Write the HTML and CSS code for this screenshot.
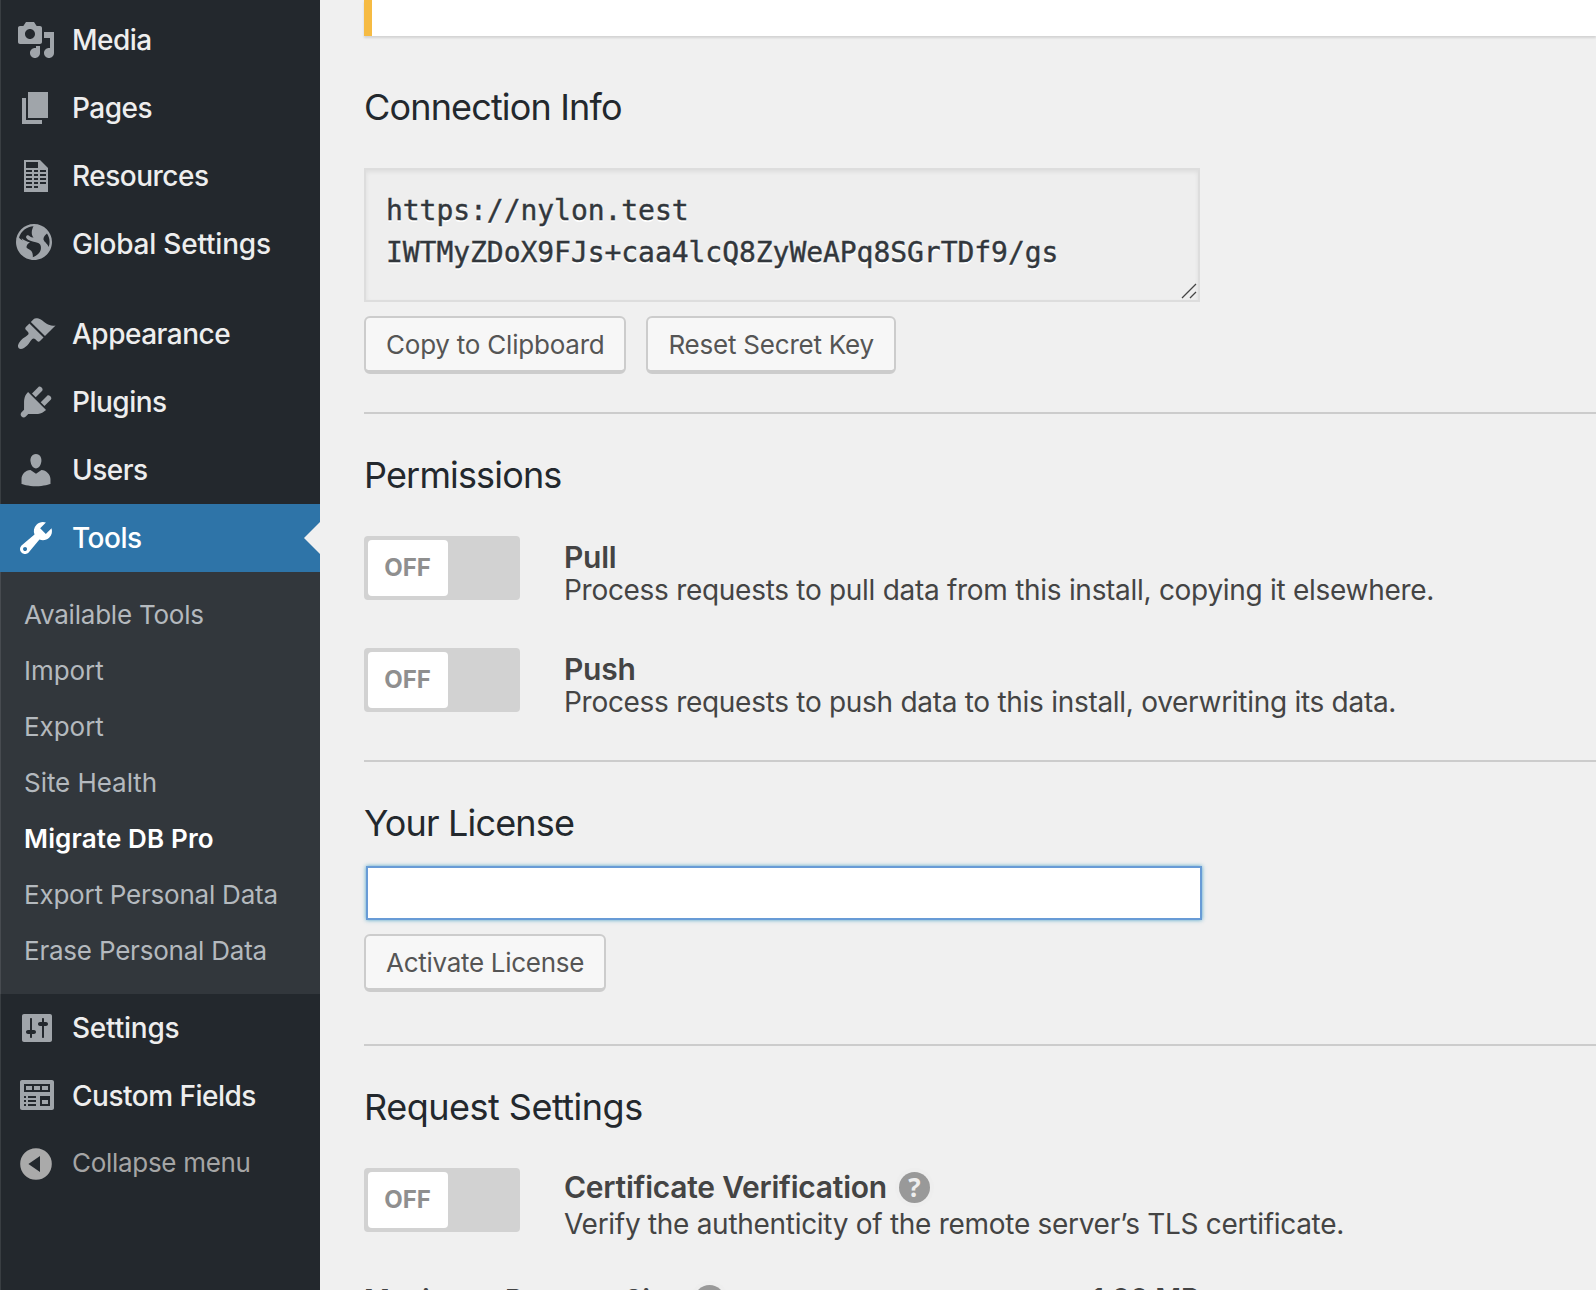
FILE: index.html
```html
<!DOCTYPE html>
<html lang="en">
<head>
<meta charset="utf-8">
<title>Migrate DB Pro</title>
<link rel="stylesheet" href="styles.css">
</head>
<body>
<div class="layout">
  <nav class="sidebar">
    <ul class="menu">
      <li class="menu-item"><svg class="icon" viewBox="0 0 20 20"><path d="M13 11V4c0-.55-.45-1-1-1h-1.67L9 1H5L3.67 3H2c-.55 0-1 .45-1 1v7c0 .55.45 1 1 1h10c.55 0 1-.45 1-1zM7 4.5c1.38 0 2.5 1.12 2.5 2.5S8.38 9.5 7 9.5 4.5 8.38 4.5 7 5.62 4.5 7 4.5zM14 6h5v10.5c0 1.38-1.12 2.5-2.5 2.5S14 17.88 14 16.5s1.12-2.5 2.5-2.5c.17 0 .34.02.5.05V9h-3V6zm-4 8.05V13h2v3.5c0 1.38-1.12 2.5-2.5 2.5S7 17.88 7 16.5 8.12 14 9.5 14c.17 0 .34.02.5.05z"/></svg><span>Media</span></li>
      <li class="menu-item"><svg class="icon" viewBox="0 0 20 20"><path d="M6 15V2h10v13H6zm-1 1h8v2H3V5h2v11z"/></svg><span>Pages</span></li>
      <li class="menu-item"><svg class="icon" viewBox="0 0 20 20"><path d="M12 2l4 4v12H4V2h8zm-1 4V3H5v3h6zM8 8V7H5v1h3zm3 0V7H9v1h2zm4 0V7h-3v1h3zm-7 2V9H5v1h3zm3 0V9H9v1h2zm4 0V9h-3v1h3zm-7 2v-1H5v1h3zm3 0v-1H9v1h2zm4 0v-1h-3v1h3zm-7 2v-1H5v1h3zm3 0v-1H9v1h2zm4 0v-1h-3v1h3zm-7 2v-1H5v1h3zm3 0v-1H9v1h2z"/></svg><span>Resources</span></li>
      <li class="menu-item track-wide"><svg class="icon" viewBox="0 0 20 20"><path d="M9 0C4.03 0 0 4.03 0 9s4.03 9 9 9 9-4.03 9-9-4.03-9-9-9zm3.46 11.95c0 1.47-.8 3.3-4.06 4.7.3-4.17-2.52-3.69-3.2-5 .126-1.1.804-2.063 1.8-2.55-1.552-.266-3-.96-4.18-2 .05.47.28.904.64 1.21-.782-.295-1.458-.817-1.94-1.5.977-3.225 3.883-5.482 7.25-5.63-.84 1.38-1.5 4.13 0 5.57C7.23 7 6.26 5 5.41 5.79c-1.13 1.06.33 2.51 3.42 3.08 3.29.59 3.66 1.58 3.63 3.08zm1.34-4c-.32-1.11.62-2.23 1.69-3.14 1.356 1.955 1.67 4.45.84 6.68-.77-1.89-2.17-2.32-2.53-3.57v.03z"/></svg><span>Global Settings</span></li>
      <li class="menu-item separated"><svg class="icon" viewBox="0 0 20 20"><path d="M14.48 11.06L7.41 3.99l1.5-1.5c.5-.56 2.3-.47 3.51.32 1.21.8 1.43 1.28 2.91 2.1 1.18.64 2.45 1.26 4.45.85zm-.71.71L6.7 4.7 4.93 6.47c-.39.39-.39 1.02 0 1.41l1.06 1.06c.39.39.39 1.03 0 1.42-.6.6-1.43 1.11-2.21 1.69-.35.26-.7.53-1.01.84C1.43 14.23.4 16.08 1.4 17.07c.99 1 2.84-.03 4.18-1.36.31-.31.58-.66.85-1.02.57-.78 1.08-1.61 1.69-2.21.39-.39 1.02-.39 1.41 0l1.06 1.06c.39.39 1.02.39 1.41 0z"/></svg><span>Appearance</span></li>
      <li class="menu-item"><svg class="icon" viewBox="0 0 20 20"><path d="M13.11 4.36L9.87 7.6 8 5.73l3.24-3.24c.35-.34 1.05-.2 1.56.32.52.51.66 1.21.31 1.55zm-8 1.77l.91-1.12 9.01 9.01-1.19.84c-.71.71-2.63 1.16-3.82 1.16H6.14L4.9 17.26c-.59.59-1.54.59-2.12 0-.59-.58-.59-1.53 0-2.12l1.24-1.24v-3.88c0-1.13.4-3.19 1.09-3.89zm7.26 3.97l3.24-3.24c.34-.35 1.04-.21 1.55.31.52.51.66 1.21.31 1.55l-3.24 3.25z"/></svg><span>Plugins</span></li>
      <li class="menu-item"><svg class="icon" viewBox="0 0 20 20"><path d="M10 9.25c-2.27 0-2.73-3.44-2.73-3.44C7 4.02 7.82 2 9.97 2c2.16 0 2.98 2.02 2.71 3.81 0 0-.41 3.44-2.68 3.44zm0 2.57L12.72 10c2.39 0 4.52 2.33 4.52 4.53v2.49s-3.65 1.13-7.24 1.13c-3.65 0-7.24-1.13-7.24-1.13v-2.49c0-2.25 1.94-4.48 4.47-4.48z"/></svg><span>Users</span></li>
      <li class="menu-item current"><svg class="icon" viewBox="0 0 20 20"><path d="M16.68 9.77c-1.34 1.34-3.3 1.67-4.95.99l-5.41 6.52c-.99.99-2.59.99-3.58 0s-.99-2.59 0-3.57l6.52-5.42c-.68-1.65-.35-3.61.99-4.95 1.28-1.28 3.12-1.62 4.72-1.06l-2.89 2.89 2.82 2.82 2.86-2.87c.53 1.58.18 3.39-1.08 4.65zM3.81 16.21c.4.39 1.04.39 1.43 0 .4-.4.4-1.04 0-1.43-.39-.4-1.03-.4-1.43 0-.39.39-.39 1.03 0 1.43z"/></svg><span>Tools</span></li>
    </ul>
    <ul class="submenu">
      <li>Available Tools</li>
      <li class="short">Import</li>
      <li class="short">Export</li>
      <li class="short">Site Health</li>
      <li class="active">Migrate DB Pro</li>
      <li>Export Personal Data</li>
      <li>Erase Personal Data</li>
    </ul>
    <ul class="menu">
      <li class="menu-item track-wide"><svg class="icon" viewBox="0 0 20 20"><path d="M18 16V4c0-.55-.45-1-1-1H4c-.55 0-1 .45-1 1v12c0 .55.45 1 1 1h13c.55 0 1-.45 1-1zM8 11h1c.55 0 1 .45 1 1s-.45 1-1 1H8v1.5c0 .28-.22.5-.5.5s-.5-.22-.5-.5V13H6c-.55 0-1-.45-1-1s.45-1 1-1h1V5.5c0-.28.22-.5.5-.5s.5.22.5.5V11zm5-2h-1c-.55 0-1-.45-1-1s.45-1 1-1h1V5.5c0-.28.22-.5.5-.5s.5.22.5.5V7h1c.55 0 1 .45 1 1s-.45 1-1 1h-1v5.5c0 .28-.22.5-.5.5s-.5-.22-.5-.5V9z"/></svg><span>Settings</span></li>
      <li class="menu-item"><svg class="icon" viewBox="0 0 20 20"><path fill-rule="evenodd" d="M19 16V3c0-.55-.45-1-1-1H3c-.55 0-1 .45-1 1v13c0 .55.45 1 1 1h15c.55 0 1-.45 1-1zM4 4h13v4H4V4zm1 1v2h3V5H5zm4 0v2h3V5H9zm4 0v2h3V5h-3zM4 10h1v1H4zM6 10h4v1H6zM12 10h5v5h-5zM4 12h1v1H4zM6 12h4v1H6zM13 12v2h3v-2zM4 14h1v1H4zM6 14h4v1H6z"/></svg><span>Custom Fields</span></li>
      <li class="menu-item collapse"><svg class="icon" viewBox="0 0 20 20"><path fill-rule="evenodd" d="M10 2.1a7.9 7.9 0 1 0 0 15.8a7.9 7.9 0 1 0 0-15.8zM12 6v8l-5.8-4z"/></svg><span>Collapse menu</span></li>
    </ul>
  </nav>
  <main class="content">
    <div class="notice"></div>
    <section class="section">
      <h2>Connection Info</h2>
      <div class="connection">https://nylon.test<br>IWTMyZDoX9FJs+caa4lcQ8ZyWeAPq8SGrTDf9/gs<svg class="resizer" viewBox="0 0 16 16"><path d="M1 15L15 1M9 15L15 9"/></svg></div>
      <div class="buttons">
        <button class="button">Copy to Clipboard</button>
        <button class="button">Reset Secret Key</button>
      </div>
    </section>
    <section class="section permissions">
      <h2>Permissions</h2>
      <div class="option">
        <div class="switch"><span class="knob">OFF</span></div>
        <div class="option-text"><div class="option-title">Pull</div><div class="option-desc">Process requests to pull data from this install, copying it elsewhere.</div></div>
      </div>
      <div class="option">
        <div class="switch"><span class="knob">OFF</span></div>
        <div class="option-text"><div class="option-title">Push</div><div class="option-desc">Process requests to push data to this install, overwriting its data.</div></div>
      </div>
    </section>
    <section class="section license">
      <h2>Your License</h2>
      <input class="license-input" type="text">
      <div class="buttons"><button class="button">Activate License</button></div>
    </section>
    <section class="section request">
      <h2>Request Settings</h2>
      <div class="option">
        <div class="switch"><span class="knob">OFF</span></div>
        <div class="option-text spaced"><div class="option-title">Certificate Verification<span class="help">?</span></div><div class="option-desc">Verify the authenticity of the remote server’s TLS certificate.</div></div>
      </div>
      <div class="size-row"><div class="size-label">Maximum Request Size<span class="help">?</span></div><span class="size-value">1.00 MB</span></div>
    </section>
  </main>
</div>
</body>
</html>
```
FILE: styles.css
```css
* { box-sizing: border-box; }
html, body { height: 100%; }
body { margin: 0; overflow: hidden; background: #f0f0f0; color: #444; font-family: Inter, "Liberation Sans", sans-serif; }
ul { margin: 0; padding: 0; list-style: none; }
h2 { margin: 0; font-size: 36px; font-weight: 400; line-height: 44px; letter-spacing: -.84px; color: #23282d; }

.layout { display: flex; height: 1290px; overflow: hidden; }

/* Sidebar */
.sidebar { flex: none; width: 320px; padding-top: 6px; background: #23282d; box-shadow: inset 1px 0 #393e42; }
.menu-item { position: relative; display: flex; align-items: center; gap: 16px; height: 68px; padding-left: 16px; font-size: 28px; font-weight: 450; letter-spacing: -.5px; color: #eee; }
.menu-item.track-wide { letter-spacing: -.22px; }
.menu-item.separated { margin-top: 22px; }
.icon { flex: none; width: 40px; height: 40px; fill: #a0a5aa; }
.menu-item.current { background: #2e74a8; color: #fff; }
.menu-item.current .icon { fill: #fff; }
.menu-item.current::after { content: ""; position: absolute; right: 0; top: 18px; border: 16px solid transparent; border-left: 0; border-right-color: #f0f0f0; }
.submenu { height: 422px; padding: 15px 0 0 24px; background: #32373c; box-shadow: inset 1px 0 #474b50; font-size: 26px; line-height: 56px; letter-spacing: -.22px; color: #b4b9be; }
.submenu .short { letter-spacing: -.05px; }
.submenu .active { font-weight: 600; letter-spacing: .15px; color: #fff; }
.menu-item.collapse { font-size: 26px; font-weight: 400; letter-spacing: -.3px; color: #a5a5a5; }
.collapse .icon { fill: #aaa; }
.collapse span { padding-bottom: 3px; }

/* Content */
.content { flex: 1; min-width: 0; padding-left: 44px; }
.notice { height: 36px; background: #fff; border-left: 8px solid #f6bb43; box-shadow: 0 2px 2px rgba(0, 0, 0, .12); }
.section { padding-top: 39px; border-top: 2px solid #ccc; }
.notice + .section { padding-top: 49px; border-top: 0; }
.connection { position: relative; width: 836px; height: 134px; margin-top: 39px; padding: 20px 20px 0; border: 2px solid #ddd; background: #eee; box-shadow: inset 0 2px 4px rgba(0, 0, 0, .07); font: 28px/42px "DejaVu Sans Mono", monospace; letter-spacing: -.05px; color: #32373c; -webkit-text-stroke: .4px #32373c; text-shadow: 0 2px 0 #fff; white-space: nowrap; }
.resizer { position: absolute; right: 1px; bottom: 1px; width: 16px; height: 16px; fill: none; stroke: #444; stroke-width: 1.3; }
.buttons { display: flex; gap: 20px; margin-top: 14px; padding-bottom: 38px; }
.button { height: 58px; padding: 1px 20px 0; border: 2px solid #ccc; border-bottom-width: 4px; border-radius: 6px; background: #f7f7f7; color: #555; font: 26px Inter, sans-serif; letter-spacing: -.22px; white-space: nowrap; }

.option { display: flex; gap: 44px; height: 64px; margin-top: 39px; }
.option + .option { margin-top: 48px; }
.permissions { padding-bottom: 48px; }
.switch { flex: none; width: 156px; height: 64px; padding: 4px; border-radius: 4px; background: #d2d2d2; }
.knob { display: flex; align-items: center; justify-content: center; width: 80px; height: 56px; padding: 0 1px 2px 0; border-radius: 4px; background: #fff; color: #8f8f8f; font-size: 24px; font-weight: 700; }
.option-text { padding-top: 5px; white-space: nowrap; }
.option-title { display: flex; align-items: center; height: 32px; font-size: 30px; font-weight: 600; letter-spacing: -.24px; }
.option-desc { height: 34px; font-size: 28px; line-height: 34px; letter-spacing: -.29px; }
.spaced .option-title { margin: -2px 0 4px; }
.help { display: flex; align-items: center; justify-content: center; width: 31px; height: 31px; margin-left: 12px; border-radius: 50%; background: #999; box-shadow: 0 0 0 4px #eee; color: #eee; font: 700 26px "Open Sans", sans-serif; letter-spacing: 0; }

.license-input { display: block; width: 836px; height: 54px; margin: 21px 0 0 2px; border: 2px solid #689bd6; border-radius: 0; outline: 0; background: #fff; box-shadow: 0 0 4px rgba(30, 140, 190, .8); }
.license .buttons { padding-bottom: 52px; }
.license .button { letter-spacing: -.29px; }
.request h2 { letter-spacing: -.5px; }

.size-row { display: flex; align-items: center; height: 40px; margin-top: 48px; font-size: 28px; font-weight: 600; letter-spacing: .15px; white-space: nowrap; }
.size-label { display: flex; align-items: center; width: 728px; }
.size-value { padding-bottom: 2px; letter-spacing: -.15px; }
```
